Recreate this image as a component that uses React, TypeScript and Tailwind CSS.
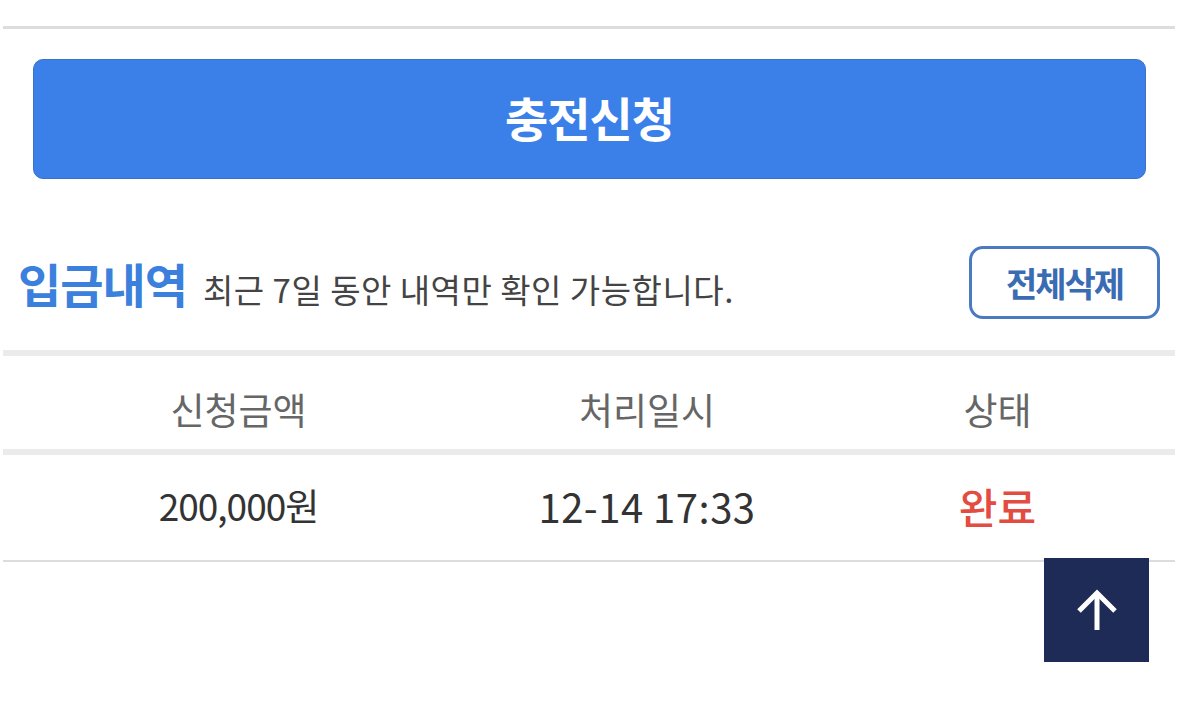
import React from 'react';

const font = { fontFamily: '"Noto Sans CJK KR", "Noto Sans", sans-serif' };

const rows = [{ amount: '200,000원', date: '12-14 17:33', status: '완료' }];

export default function App() {
  return (
    <div className="relative w-[1179px] h-[704px] bg-white" style={font}>
      <div className="mx-[3px] w-[1172px]">
        <div className="h-[26px]" />
        <div className="h-[3px] bg-[#dddddd]" />

        {/* Charge button */}
        <div className="pt-[30px] pl-[30px] pr-[29px]">
          <button className="w-full h-[120px] rounded-[10px] bg-[#3b80e8] border border-[#3a72c8] text-white text-[47px] font-bold tracking-[-1px] flex items-center justify-center pb-[3px]">
            충전신청
          </button>
        </div>

        {/* History heading */}
        <div className="flex items-center justify-between pl-[15px] pr-[15px] mt-[67px]">
          <div className="flex items-baseline gap-[16px]">
            <h2 className="text-[47px] font-bold text-[#3a80dc] tracking-[-1px] leading-none">입금내역</h2>
            <p className="text-[33px] text-[#444444] tracking-[0.5px] leading-none">최근 7일 동안 내역만 확인 가능합니다.</p>
          </div>
          <button className="w-[191px] h-[73px] rounded-[14px] border-[3px] border-[#4a7bc0] text-[#3a6cb4] text-[34px] font-bold tracking-[-2px] flex items-center justify-center">
            전체삭제
          </button>
        </div>

        {/* Table */}
        <div className="mt-[31px] h-[6px] bg-[#ebebeb]" />
        <div className="grid grid-cols-[471px_346px_1fr] h-[93px] items-center text-[37px] text-[#666666]">
          <div className="text-center pt-[14px]">신청금액</div>
          <div className="text-center pt-[14px]">처리일시</div>
          <div className="text-center pt-[14px]">상태</div>
        </div>
        <div className="h-[6px] bg-[#ebebeb]" />
        {rows.map((r) => (
          <div key={r.date} className="grid grid-cols-[471px_346px_1fr] h-[105px] items-center text-[#333333] pb-[4px]">
            <div className="text-center text-[37px] tracking-[-1px]">{r.amount}</div>
            <div className="text-center text-[40px] tracking-[0.5px]">{r.date}</div>
            <div className="text-center text-[42px] text-[#e24c41] font-medium">{r.status}</div>
          </div>
        ))}
        <div className="h-[2px] bg-[#dddddd]" />
      </div>

      {/* Scroll to top */}
      <button className="absolute left-[1044px] top-[558px] w-[105px] h-[104px] bg-[#1f2b57] flex items-center justify-center">
        <svg width="42" height="44" viewBox="0 0 42 44" fill="none" stroke="white" strokeWidth="5">
          <path d="M21 5 V42" />
          <path d="M3 23 L21 5 L39 23" />
        </svg>
      </button>
    </div>
  );
}
